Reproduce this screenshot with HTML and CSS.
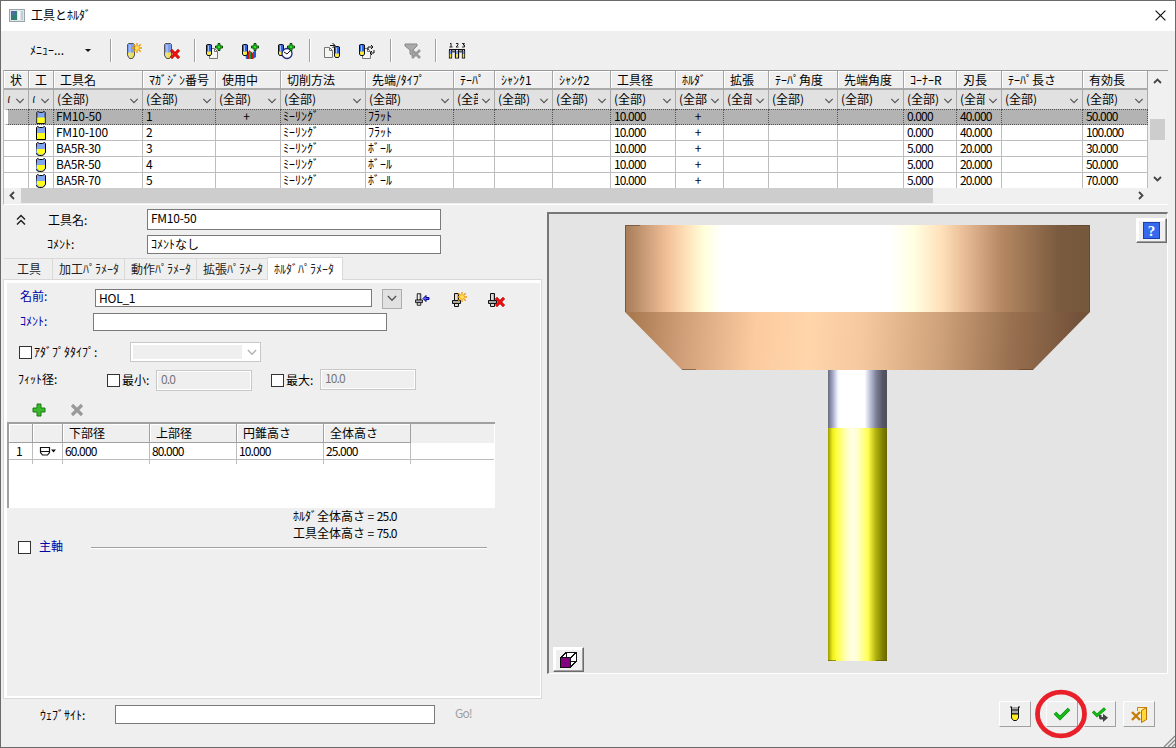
FILE: index.html
```html
<!DOCTYPE html>
<html lang="ja">
<head>
<meta charset="utf-8">
<title>工具とﾎﾙﾀﾞ</title>
<link rel="stylesheet" href="styles.css">
</head>
<body>
<svg class="defs" width="0" height="0" aria-hidden="true">
  <defs>
    <symbol id="down" viewBox="0 0 9 6"><path d="M.8 .8l3.700 3.800L8.200 .8" fill="none" stroke="#555" stroke-width="1.200"/></symbol>
    <symbol id="tube" viewBox="0 0 8 16"><path d="M.5 1.500l1-1h5l1 1v11l-2 3h-3l-2-3z" fill="#7d9df0" stroke="#555"/><path d="M1 9.500h6V12l-2 3H3l-2-3z" fill="#f0e04a"/><path d="M3 2v12" stroke="#d5e2ff" stroke-opacity=".8"/></symbol>
    <symbol id="tubeS" viewBox="0 0 6 12"><path d="M.5 1l1-.5h3l1 .5v9l-1 1.500h-3l-1-1.500z" fill="#2d67e0" stroke="#111"/><path d="M1 7.500h4V10l-1 1H2l-1-1z" fill="#ffe93a"/><path d="M2.500 1.500v6" stroke="#a8c4ff"/></symbol>
    <symbol id="plus" viewBox="0 0 8 8"><path d="M3 .5h2v2.500h2.500v2H5v2.500H3V5H.5V3H3z" fill="#2ce02c" stroke="#004b00"/></symbol>
    <symbol id="cross" viewBox="0 0 10 10"><path d="M1 1l8 8M9 1L1 9" stroke="#a00000" stroke-width="3"/><path d="M1 1l8 8M9 1L1 9" stroke="#ee1111" stroke-width="2"/></symbol>
    <symbol id="spark" viewBox="0 0 10 10"><path d="M5 0v10M0 5h10M1.300 1.300l7.400 7.400M8.700 1.300L1.300 8.700" stroke="#f09a00" stroke-width="1.300"/><circle cx="5" cy="5" r="2" fill="#ffe45a"/></symbol>
    <symbol id="doc" viewBox="0 0 9 11"><path d="M.5 .5h5l3 3v7h-8z" fill="#f6f6f0" stroke="#777"/><path d="M5.500 .5v3h3" fill="none" stroke="#777"/></symbol>
    <symbol id="holder" viewBox="0 0 9 14"><path d="M2.500 .5h4v7h-4z" fill="#bbb" stroke="#111"/><path d="M4 1.500v6" stroke="#fff"/><path d="M.5 7.500h8v3h-8z" fill="#aaa" stroke="#111"/><path d="M2.500 10.500h4v3h-4z" fill="#ddd" stroke="#111"/></symbol>
    <symbol id="flat" viewBox="0 0 10 14"><path d="M.5 1.500l1-1 2 1h3l2-1 1 1v12h-9z" fill="#83a4ee" stroke="#000"/><path d="M1 7h8v6H1z" fill="#ffff18"/></symbol>
    <symbol id="ball" viewBox="0 0 10 14"><path d="M.5 1.500l1-1 2 1h3l2-1 1 1v9l-2 2.500-2 .5h-2l-2-.5-2-2.500z" fill="#83a4ee" stroke="#000"/><path d="M1 7h8v3l-2 2.500H3L1 10z" fill="#ffff18"/></symbol>
  </defs>
</svg>
<div class="window">
  <header class="title">
    <svg width="16" height="13" viewBox="0 0 16 13"><rect x=".5" y=".5" width="15" height="12" fill="#dfe6ea" stroke="#9aa5ab"/><rect x="2" y="2" width="6" height="9" fill="#2f8073"/><rect x="2" y="2" width="4" height="4" fill="#4b6f9f"/><path d="M9 2h2v9H9z" fill="#f8f8f8"/><path d="M12 2h2v9h-2z" fill="#c2ccd2"/></svg>
    <span>工具とﾎﾙﾀﾞ</span>
    <svg class="close" width="11" height="11" viewBox="0 0 11 11"><path d="M.6 .6l9.800 9.800M10.400 .6L.6 10.400" stroke="#111" stroke-width="1.200"/></svg>
  </header>

  <div class="toolbar">
    <div class="menu"><span>ﾒﾆｭｰ...</span><i></i></div>
    <b></b>
    <svg viewBox="0 0 20 20"><use href="#tube" x="3" y="2" width="8" height="16"/><use href="#spark" x="8" y="2" width="10" height="10"/></svg>
    <svg viewBox="0 0 20 20"><use href="#tube" x="2" y="2" width="8" height="16"/><use href="#cross" x="8" y="8" width="10" height="10"/></svg>
    <b></b>
    <svg viewBox="0 0 20 20"><use href="#doc" x="5" y="7" width="9" height="11"/><use href="#tubeS" x="2" y="3" width="6" height="12"/><use href="#plus" x="11" y="2" width="8" height="8"/></svg>
    <svg viewBox="0 0 20 20"><path d="M5 12l3-2v8H6z" fill="#36d"/><path d="M7 12l3-3v9H7z" fill="#c11"/><path d="M10 10l3 2v6h-3z" fill="#c11"/><path d="M9 11h2v7H9z" fill="#1a9a3a"/><path d="M13 11l3-2v7l-3 2z" fill="#225bd0"/><use href="#tubeS" x="2" y="3" width="6" height="12"/><use href="#plus" x="11" y="2" width="8" height="8"/></svg>
    <svg viewBox="0 0 20 20"><use href="#tubeS" x="2" y="3" width="6" height="12"/><circle cx="11" cy="12.500" r="5" fill="#fff" stroke="#1c2c80" stroke-width="1.300"/><path d="M8 11l3 2 3-3" fill="none" stroke="#111"/><use href="#plus" x="11" y="2" width="8" height="8"/></svg>
    <b></b>
    <svg viewBox="0 0 20 20"><use href="#doc" x="2" y="6" width="9" height="11"/><path d="M8 4.500h5M10.500 2l2.500 2.500L10.500 7" fill="none" stroke="#111"/><use href="#tubeS" x="12" y="5" width="6" height="12"/></svg>
    <svg viewBox="0 0 20 20"><use href="#doc" x="5" y="7" width="9" height="11"/><use href="#tubeS" x="2" y="3" width="6" height="12"/><path d="M11 9V6h5M14 4l2 2-2 2M17 9v3h-4M15 10l-2 2 2 2" fill="none" stroke="#111"/></svg>
    <b></b>
    <svg viewBox="0 0 20 20"><path d="M2 3h12v2l-4 4v6l-3-2V9L2 5z" fill="#aaa" stroke="#888"/><path d="M9 9l8 8M17 9l-8 8" stroke="#999" stroke-width="2.600"/></svg>
    <b></b>
    <svg viewBox="0 0 20 20"><path d="M3 3l1-1v4M2.500 6h3M9 2.500h2v1.500L9 6h2.500M15 2.500h2.500L16 4h1.500v2H15" fill="none" stroke="#111" stroke-width=".9"/><path d="M2 8.500h16M2.500 9v8h2V9M8.500 9v8h3V9M15.500 9v8h2V9" fill="#fff" stroke="#111" stroke-width="1.200"/><path d="M5 10.500h3M12 10.500h3" stroke="#555" stroke-width="2"/><path d="M3.500 10v3M10 10v3M16.500 10v3" stroke="#6d90ec" stroke-width="1.600"/><path d="M3.500 13v3.500M10 13v3.500M16.500 13v3.500" stroke="#f4dc2a" stroke-width="1.600"/></svg>
  </div>

  <div class="list">
    <table class="tools">
      <colgroup><col style="width:25px"><col style="width:25px"><col style="width:89px"><col style="width:73px"><col style="width:65px"><col style="width:85px"><col style="width:88px"><col style="width:41px"><col style="width:58px"><col style="width:58px"><col style="width:65px"><col style="width:48px"><col style="width:45px"><col style="width:69px"><col style="width:66px"><col style="width:53px"><col style="width:45px"><col style="width:81px"><col style="width:65px"></colgroup>
      <tr class="head"><th>状<th>工<th>工具名<th>ﾏｶﾞｼﾞﾝ番号<th>使用中<th>切削方法<th>先端/ﾀｲﾌﾟ<th>ﾃｰﾊﾟ<th>ｼｬﾝｸ1<th>ｼｬﾝｸ2<th>工具径<th>ﾎﾙﾀﾞ<th>拡張<th>ﾃｰﾊﾟ角度<th>先端角度<th>ｺｰﾅｰR<th>刃長<th>ﾃｰﾊﾟ長さ<th>有効長</tr>
      <tr class="filter">
        <td class="tiny"><div><span>(</span><svg><use href="#down"/></svg></div>
        <td class="tiny"><div><span>(</span><svg><use href="#down"/></svg></div>
        <td><div><span>(全部)</span><svg><use href="#down"/></svg></div>
        <td><div><span>(全部)</span><svg><use href="#down"/></svg></div>
        <td><div><span>(全部)</span><svg><use href="#down"/></svg></div>
        <td><div><span>(全部)</span><svg><use href="#down"/></svg></div>
        <td><div><span>(全部)</span><svg><use href="#down"/></svg></div>
        <td><div><span>(全部)</span><svg><use href="#down"/></svg></div>
        <td><div><span>(全部)</span><svg><use href="#down"/></svg></div>
        <td><div><span>(全部)</span><svg><use href="#down"/></svg></div>
        <td><div><span>(全部)</span><svg><use href="#down"/></svg></div>
        <td><div><span>(全部)</span><svg><use href="#down"/></svg></div>
        <td><div><span>(全部)</span><svg><use href="#down"/></svg></div>
        <td><div><span>(全部)</span><svg><use href="#down"/></svg></div>
        <td><div><span>(全部)</span><svg><use href="#down"/></svg></div>
        <td><div><span>(全部)</span><svg><use href="#down"/></svg></div>
        <td><div><span>(全部)</span><svg><use href="#down"/></svg></div>
        <td><div><span>(全部)</span><svg><use href="#down"/></svg></div>
        <td><div><span>(全部)</span><svg><use href="#down"/></svg></div>
      </tr>
      <tr class="sel"><td><td><svg class="ti"><use href="#flat"/></svg><td class="n name">FM10-50<td class="n">1<td class="c">+<td>ﾐｰﾘﾝｸﾞ<td>ﾌﾗｯﾄ<td><td><td><td class="n">10.000<td class="c">+<td><td><td><td class="n">0.000<td class="n">40.000<td><td class="n">50.000</tr>
      <tr><td><td><svg class="ti"><use href="#flat"/></svg><td class="n name">FM10-100<td class="n">2<td><td>ﾐｰﾘﾝｸﾞ<td>ﾌﾗｯﾄ<td><td><td><td class="n">10.000<td class="c">+<td><td><td><td class="n">0.000<td class="n">40.000<td><td class="n">100.000</tr>
      <tr><td><td><svg class="ti"><use href="#ball"/></svg><td class="n name">BA5R-30<td class="n">3<td><td>ﾐｰﾘﾝｸﾞ<td>ﾎﾞｰﾙ<td><td><td><td class="n">10.000<td class="c">+<td><td><td><td class="n">5.000<td class="n">20.000<td><td class="n">30.000</tr>
      <tr><td><td><svg class="ti"><use href="#ball"/></svg><td class="n name">BA5R-50<td class="n">4<td><td>ﾐｰﾘﾝｸﾞ<td>ﾎﾞｰﾙ<td><td><td><td class="n">10.000<td class="c">+<td><td><td><td class="n">5.000<td class="n">20.000<td><td class="n">50.000</tr>
      <tr><td><td><svg class="ti"><use href="#ball"/></svg><td class="n name">BA5R-70<td class="n">5<td><td>ﾐｰﾘﾝｸﾞ<td>ﾎﾞｰﾙ<td><td><td><td class="n">10.000<td class="c">+<td><td><td><td class="n">5.000<td class="n">20.000<td><td class="n">70.000</tr>
    </table>
    <div class="vscroll">
      <svg width="9" height="6" viewBox="0 0 9 6"><path d="M1 5l3.500-3.500L8 5" fill="none" stroke="#444" stroke-width="1.800"/></svg>
      <i></i>
      <svg width="9" height="6" viewBox="0 0 9 6"><path d="M1 1l3.500 3.500L8 1" fill="none" stroke="#444" stroke-width="1.800"/></svg>
    </div>
    <div class="hscroll">
      <svg width="6" height="9" viewBox="0 0 6 9"><path d="M5 1L1.500 4.500 5 8" fill="none" stroke="#444" stroke-width="1.800"/></svg>
      <i></i>
      <svg width="6" height="9" viewBox="0 0 6 9"><path d="M1 1l3.500 3.500L1 8" fill="none" stroke="#444" stroke-width="1.800"/></svg>
    </div>
  </div>

  <main class="lower">
    <section class="left">
      <div class="top-form">
        <svg width="10" height="12" viewBox="0 0 10 12"><path d="M1 5.500L5 1.500l4 4M1 10.500l4-4 4 4" fill="none" stroke="#222" stroke-width="1.500"/></svg>
        <label class="t1">工具名:</label><div class="field tall n name">FM10-50</div>
        <span></span><label>ｺﾒﾝﾄ:</label><div class="field">ｺﾒﾝﾄなし</div>
      </div>
      <nav class="tabs"><span>工具</span><span>加工ﾊﾟﾗﾒｰﾀ</span><span>動作ﾊﾟﾗﾒｰﾀ</span><span>拡張ﾊﾟﾗﾒｰﾀ</span><span class="on">ﾎﾙﾀﾞﾊﾟﾗﾒｰﾀ</span></nav>
      <div class="panel">
        <div class="row r-name">
          <label class="blue">名前:</label><div class="field n name">HOL_1</div>
          <div class="drop"><svg><use href="#down"/></svg></div>
          <svg class="hi" viewBox="0 0 18 18"><use href="#holder" x="2" y="2" width="8" height="13"/><path d="M10 7.500l3-3v2h3v2h-3v2z" fill="#5a5aff" stroke="#000090"/></svg>
          <svg class="hi" viewBox="0 0 18 18"><use href="#holder" x="2" y="2" width="9" height="14"/><use href="#spark" x="7" y="1" width="10" height="10"/></svg>
          <svg class="hi" viewBox="0 0 18 18"><use href="#holder" x="1" y="2" width="9" height="14"/><use href="#cross" x="8" y="6" width="10" height="10"/></svg>
        </div>
        <div class="row r-comment"><label class="blue">ｺﾒﾝﾄ:</label><div class="field"></div></div>
        <div class="row r-adapter"><i class="check"></i><label>ｱﾀﾞﾌﾟﾀﾀｲﾌﾟ:</label><div class="combo"><i></i><svg><use href="#down"/></svg></div></div>
        <div class="row r-fit"><label class="lead">ﾌｨｯﾄ径:</label><i class="check"></i><label class="mm">最小:</label><div class="dis n">0.0</div><i class="check two"></i><label class="mm">最大:</label><div class="dis n up">10.0</div></div>
        <div class="row r-tools">
          <svg width="14" height="14" viewBox="0 0 14 14"><path d="M5 1h4v4h4v4H9v4H5V9H1V5h4z" fill="#3cb82e" stroke="#167c10"/></svg>
          <svg width="14" height="14" viewBox="0 0 14 14"><path d="M2 2l10 10M12 2L2 12" stroke="#999" stroke-width="3.200"/></svg>
        </div>
        <div class="seg-box">
          <table class="seg">
            <colgroup><col style="width:24px"><col style="width:30px"><col style="width:87px"><col style="width:87px"><col style="width:87px"><col style="width:87px"><col></colgroup>
            <tr><th><th><th>下部径<th>上部径<th>円錐高さ<th>全体高さ<th></tr>
            <tr><td class="n num">1<td><svg class="cup" viewBox="0 0 18 11"><path d="M1.500 1.500h9v5l-2 2.500h-5l-2-2.500zM1.500 5.500h9" fill="none" stroke="#111" stroke-width="1.200"/><path d="M12 3.500h5l-2.500 3z" fill="#111"/></svg><td class="n">60.000<td class="n">80.000<td class="n">10.000<td class="n">25.000<td></tr>
            <tr class="stub"><td><td><td><td><td><td><td></tr>
          </table>
        </div>
        <div class="sums"><div>ﾎﾙﾀﾞ全体高さ<span class="eq"> = </span><span class="n">25.0</span></div><div>工具全体高さ<span class="eq"> = </span><span class="n">75.0</span></div></div>
        <div class="row r-spindle"><i class="check"></i><label class="blue">主軸</label><hr></div>
      </div>
      <div class="web"><label>ｳｪﾌﾞｻｲﾄ:</label><div class="field"></div><span class="n">Go!</span></div>
    </section>

    <section class="right">
      <div class="viewer">
        <svg class="model" width="618" height="459" viewBox="549 214 618 459">
          <defs>
            <linearGradient id="gTop"><stop offset="0" stop-color="#a67b58"/><stop offset=".09" stop-color="#f1bf98"/><stop offset=".13" stop-color="#ffdfb6"/><stop offset=".17" stop-color="#ffffdc"/><stop offset=".21" stop-color="#fff"/><stop offset=".57" stop-color="#fff"/><stop offset=".62" stop-color="#ffffe2"/><stop offset=".68" stop-color="#ffe1ba"/><stop offset=".73" stop-color="#e8bc96"/><stop offset=".81" stop-color="#b58863"/><stop offset=".93" stop-color="#7b5b3f"/><stop offset="1" stop-color="#76583c"/></linearGradient>
            <linearGradient id="gCone" gradientUnits="userSpaceOnUse" x1="630" y1="340" x2="1075" y2="370"><stop offset="0" stop-color="#a9794f"/><stop offset=".12" stop-color="#d1a07a"/><stop offset=".28" stop-color="#fccb9f"/><stop offset=".4" stop-color="#ffd5aa"/><stop offset=".52" stop-color="#f6c8a0"/><stop offset=".7" stop-color="#cca078"/><stop offset=".85" stop-color="#9a7150"/><stop offset="1" stop-color="#73523a"/></linearGradient>
            <linearGradient id="gShank"><stop offset="0" stop-color="#676b80"/><stop offset=".07" stop-color="#9b9fba"/><stop offset=".16" stop-color="#eef0ff"/><stop offset=".2" stop-color="#fff"/><stop offset=".62" stop-color="#fff"/><stop offset=".7" stop-color="#c7cbe2"/><stop offset=".82" stop-color="#7c7f94"/><stop offset=".93" stop-color="#535463"/><stop offset="1" stop-color="#50505c"/></linearGradient>
            <linearGradient id="gCut"><stop offset="0" stop-color="#9a9a00"/><stop offset=".08" stop-color="#f0f01c"/><stop offset=".15" stop-color="#ffff44"/><stop offset=".3" stop-color="#ffffb8"/><stop offset=".42" stop-color="#ffffe9"/><stop offset=".52" stop-color="#ffffc0"/><stop offset=".68" stop-color="#ffff50"/><stop offset=".8" stop-color="#b7b710"/><stop offset=".93" stop-color="#7e7e00"/><stop offset="1" stop-color="#686800"/></linearGradient>
          </defs>
          <rect x="625" y="225" width="465" height="87" fill="url(#gTop)"/>
          <path d="M625 312h465l-57 58H682z" fill="url(#gCone)"/>
          <path d="M625.500 312v-86.500H640M1070 225.500h19.500V312M682 369.500h14M1019 369.500h14" fill="none" stroke="#5e4329" stroke-opacity=".6"/>
          <rect x="828" y="370" width="59" height="58" fill="url(#gShank)"/>
          <rect x="828" y="428" width="59" height="233" fill="url(#gCut)"/>
          <path d="M828 660.500h8M876 660.500h11" stroke="#555500" stroke-opacity=".6"/>
        </svg>
        <div class="vbtn help"><svg width="17" height="17" viewBox="0 0 17 17"><rect x=".5" y=".5" width="16" height="16" fill="#3569ee" stroke="#1b3fae"/><text x="8.500" y="14" text-anchor="middle">?</text></svg></div>
        <div class="vbtn cube"><svg width="17" height="16" viewBox="0 0 17 16" shape-rendering="crispEdges"><path d="M1 5.500L6 .5h10v9l-5 5M6 .5v5M11 5.500l5-5M11 9.500h5" fill="#fff" stroke="#111"/><rect x=".5" y="5.500" width="10" height="10" fill="#800080" stroke="#111"/></svg></div>
      </div>
      <div class="actions">
        <button><svg width="12" height="16" viewBox="0 0 12 16"><path d="M1 1h2M9 1h2M2.500 1v7h7V1" fill="#aaa" stroke="#111"/><path d="M2 4h8" stroke="#111"/><path d="M2.500 8h7v4l-2 2.500h-3l-2-2.500z" fill="#ffef20" stroke="#111"/></svg></button>
        <button class="ok"><svg width="18" height="14" viewBox="0 0 18 14"><path d="M2 6l5 5 9-9" fill="none" stroke="#078c0c" stroke-width="3.600"/><path d="M2 6l5 5 9-9" fill="none" stroke="#14bd18" stroke-width="2.200"/></svg></button>
        <button><svg width="18" height="15" viewBox="0 0 18 15"><path d="M2 4.500l4 4 8-7" fill="none" stroke="#078c0c" stroke-width="3"/><path d="M2 4.500l4 4 8-7" fill="none" stroke="#14bd18" stroke-width="1.800"/><path d="M8 8v2.500c0 1.500 1 2 2 2h2V15l5-4.200-5-4V10h-1.500V8z" fill="#444"/></svg></button>
        <button class="exit"><svg width="17" height="17" viewBox="0 0 17 17"><path d="M6.500 5V1.500h9v12h-3" fill="#fff0b0" stroke="#c88400"/><path d="M10.500 4.500l5-3v12l-5 3z" fill="#ffd83c" stroke="#b87400"/><path d="M1 6l8 8M9 6l-8 8" stroke="#c67c08" stroke-width="2.400"/></svg></button>
        <svg class="ring" width="54" height="50" viewBox="0 0 54 50"><ellipse cx="27" cy="25" rx="23.500" ry="21.800" fill="none" stroke="#e8202a" stroke-width="4.800"/></svg>
      </div>
    </section>
  </main>
  <svg class="grip" width="12" height="12" viewBox="0 0 12 12"><path d="M1 12L12 1M5 12l7-7M9 12l3-3" stroke="#888" stroke-width="1.300"/></svg>
</div>
</body>
</html>
```

FILE: styles.css
```css
* { box-sizing: border-box; }
body {
  margin: 0;
  font: 12px/14px "Noto Sans CJK JP", sans-serif;
  color: #000;
  background: #efefef;
}
.defs { position: absolute; }
svg { display: block; flex: none; }
.n { letter-spacing: -.85px; white-space: pre; }
.name { letter-spacing: -.25px; }
.eq { white-space: pre; letter-spacing: -.1px; }
.window {
  position: relative;
  width: 1176px;
  height: 748px;
  overflow: hidden;
  border: 1px solid #6a6a6a;
  display: flex;
  flex-direction: column;
}

.title { height: 30px; flex: none; background: #fff; display: flex; align-items: center; padding: 0 4px 2px 8px; gap: 6px; }
.title .close { margin-left: auto; margin-right: 5px; }

.toolbar {
  height: 39px;
  flex: none;
  display: grid;
  grid-template-columns: 80px 14px 38px 32px 10px 36px 36px 33px 13px 35px 33px 13px 32px 12px 20px;
  padding-left: 29px;
  align-items: center;
}
.toolbar > svg { width: 20px; height: 20px; }
.toolbar b { width: 2px; height: 23px; border-left: 1px solid #a0a0a0; border-right: 1px solid #fff; }
.menu { display: flex; align-items: center; justify-content: space-between; padding-right: 19px; }
.menu span { margin-top: -2px; }
.menu i { border: 3px solid transparent; border-top-color: #111; border-bottom: 0; }

.list {
  flex: none;
  height: 135px;
  width: 1165px;
  margin-left: 2px;
  border-top: 1px solid #999;
  border-left: 1px solid #bbb;
  border-bottom: 1px solid #fff;
  display: grid;
  grid-template-columns: 1145px 18px;
  grid-template-rows: 117px 15px;
  overflow: hidden;
}
table { border-collapse: separate; border-spacing: 0; table-layout: fixed; }
.tools { width: 1144px; height: 118px; }
.tools tr { height: 16px; }
.tools td, .tools th { padding: 0 0 0 2px; font-weight: 400; text-align: left; overflow: hidden; white-space: nowrap; line-height: 14px; }
.tools td { border-right: 1px solid #bdbdbd; border-bottom: 1px solid #bdbdbd; background: #fff; height: 16px; padding-bottom: 2px; line-height: 13px; }
.tools .n { padding-left: 3px; }
.tools .name { padding-left: 2px; }
.tools th { height: 19px; padding-left: 6px; background: #efefef; border-right: 1px solid #a5a5a5; border-bottom: 2px solid #aaa; box-shadow: inset 1px 1px #fff; }
.tools .filter td { height: 19px; background: #e1e1e1; border-bottom: 0; border-right-color: #aaa; padding: 0; }
.filter div { display: flex; align-items: center; padding: 0 3px; height: 18px; }
.filter span { flex: 1; min-width: 0; overflow: hidden; margin-top: -1px; line-height: 16px; }
.filter svg { width: 10px; height: 6px; margin-left: 3px; margin-top: 3px; }
.filter .tiny span { height: 7px; line-height: 7px; margin-top: 0; }
.tools .sel td { background: #b3b3b3; border-right: 1px dotted #555; border-bottom: 1px dotted #555; border-top: 1px dotted #555; line-height: 12px; }
.tools .sel td:first-child { border-left: 4px solid #fff; }
.tools .c { text-align: center; padding-left: 0; padding-right: 3px; }
.ti { width: 10px; height: 14px; margin: 0 0 -2px 5px; }
.tools .sel .ti { height: 13px; }

.vscroll { background: #f0f0f0; display: flex; flex-direction: column; align-items: center; padding: 7px 2px 6px 1px; }
.vscroll i { width: 15px; height: 21px; margin: 35px 0 auto; background: #cdcdcd; }
.hscroll { grid-column: 1 / -1; height: 15px; display: flex; align-items: center; padding-left: 5px; background: #f0f0f0; }
.hscroll i { width: 912px; height: 15px; margin: 0 205px 0 6px; background: #cdcdcd; }

.lower { flex: 1; display: grid; grid-template-columns: 546px 620px; align-items: start; }
.field { height: 19px; border: 1px solid #7a7a7a; background: #fff; padding: 1px 3px; line-height: 14px; }

.top-form { display: grid; grid-template-columns: 31px 100px 294px; grid-template-rows: 22px 18px; row-gap: 4px; align-items: center; padding: 4px 0 0 15px; height: 51px; }
.top-form label { margin-top: -1px; padding-left: 0; }
.top-form .t1 { padding-left: 1px; }
.top-form .tall { height: 21px; align-self: start; }
.tabs { height: 23px; display: flex; align-items: flex-end; padding-left: 3px; }
.tabs span { height: 21px; border-top: 1px solid #d9d9d9; border-right: 1px solid #d9d9d9; width: 72px; padding-left: 6px; line-height: 19px; white-space: nowrap; color: #222; }
.tabs span:first-child { width: 49px; padding-left: 13px; }
.tabs .on { height: 23px; width: 76px; margin-left: -2px; margin-bottom: -1px; background: #fff; border-left: 1px solid #d9d9d9; line-height: 21px; position: relative; }
.panel { height: 420px; width: 539px; margin-left: 2px; border: 1px solid #d9d9d9; box-shadow: inset 3px 3px #fff, inset -1px -2px #fff; padding: 6px 0 0 3px; }
.row { display: flex; align-items: center; }
.blue { color: #0000a8; }
.check { width: 13px; height: 13px; border: 1px solid #333; background: #fff; flex: none; }
.r-name { height: 22px; padding-left: 13px; margin-top: 1px; }
.r-name label { width: 75px; margin-top: -5px; }
.r-name .field { width: 277px; height: 18px; margin-top: -1px; line-height: 13px; }
.drop { width: 20px; height: 20px; margin: 1px 11px 0 10px; border: 1px solid #adadad; background: #e1e1e1; display: grid; place-items: center; }
.drop svg, .combo svg { width: 10px; height: 7px; }
.hi { width: 18px; height: 18px; margin: 4px 19px 0 0; }
.r-comment { height: 19px; padding-left: 13px; margin-top: 3px; }
.r-comment label { width: 73px; margin-top: -1px; }
.r-comment .field { width: 294px; height: 18px; }
.r-adapter { height: 20px; margin-top: 11px; padding-left: 12px; }
.r-adapter label { width: 98px; padding-left: 2px; }
.combo { width: 131px; height: 20px; border: 1px solid #c8c8c8; background: #fff; display: flex; align-items: center; padding: 0 3px 0 2px; justify-content: space-between; }
.combo i { width: 109px; height: 14px; background: #efefef; }
.combo svg { opacity: .45; }
.r-fit { height: 22px; margin-top: 7px; padding-left: 11px; }
.r-fit .lead { width: 89px; margin-top: -3px; }
.mm { width: 36px; padding-left: 2px; white-space: nowrap; }
.two { margin-left: 19px; }
.dis { width: 96px; height: 21px; border: 1px solid #c8c8c8; box-shadow: inset 0 0 0 1px #fff; padding: 1px 4px; color: #777; line-height: 14px; }
.up { margin-top: -2px; }
.r-tools { height: 15px; margin-top: 11px; padding-left: 25px; gap: 24px; }
.seg-box { height: 86px; width: 488px; margin-top: 5px; border-top: 2px solid #a0a0a0; border-left: 2px solid #a0a0a0; background: #fff; }
.seg { width: 485px; }
.seg th { height: 19px; padding: 0 0 1px 6px; text-align: left; font-weight: 400; background: #efefef; border-right: 1px solid #a0a0a0; border-bottom: 1px solid #a0a0a0; box-shadow: inset 1px 1px #fff; }
.seg td { height: 17px; padding: 0 0 1px 2px; border-right: 1px solid #bdbdbd; border-bottom: 1px solid #bdbdbd; }
.seg th:last-child, .seg td:last-child { border-right: 0; }
.seg th:last-child { border-bottom: 0; box-shadow: none; }
.seg .stub td { height: 4px; border-bottom: 0; padding: 0; }
.seg .num { padding-left: 7px; }
.cup { width: 18px; height: 11px; margin: 1px 0 0 4px; }
.sums { padding-left: 286px; line-height: 17px; margin-top: -1px; }
.r-spindle { height: 14px; margin-top: -1px; padding-left: 11px; }
.r-spindle label { width: 60px; padding-left: 8px; margin-top: -3px; }
.r-spindle hr { width: 396px; margin: 1px 0 0; height: 2px; border: 0; border-top: 1px solid #a0a0a0; border-bottom: 1px solid #fff; }
.web { display: flex; align-items: center; height: 19px; margin-top: 6px; padding-left: 39px; }
.web label { width: 75px; }
.web .field { width: 320px; }
.web span { margin: -3px 0 0 20px; color: #a0a0a0; }

.viewer { position: relative; width: 621px; height: 462px; margin-top: 7px; background: #e4e4e4; border-style: solid; border-width: 2px 1px 1px 2px; border-color: #777 #fff #fff #777; overflow: hidden; }
.vbtn { position: absolute; width: 31px; height: 25px; background: #efefef; display: grid; place-items: center; border: 1px solid; border-color: #fff #6c6c6c #6c6c6c #fff; box-shadow: inset -1px -1px #a0a0a0, inset 2px 2px #fff; }
.help { right: 0; top: 4px; }
.cube { left: 4px; bottom: 1px; }
.help text { font: bold 15px "Liberation Serif", serif; fill: #fff; }
.actions { position: relative; display: flex; padding: 27px 0 0 452px; }
.actions button { width: 32px; height: 26px; padding: 0; border: 1px solid; border-color: #fff #a0a0a0 #a0a0a0 #fff; background: #efefef; display: grid; place-items: center; }
.actions .ok { margin: 0 6px 0 15px; }
.actions .exit { margin-left: 7px; }
.ring { position: absolute; left: 487px; top: 15px; }
.grip { position: absolute; right: 0; bottom: 0; }
```
